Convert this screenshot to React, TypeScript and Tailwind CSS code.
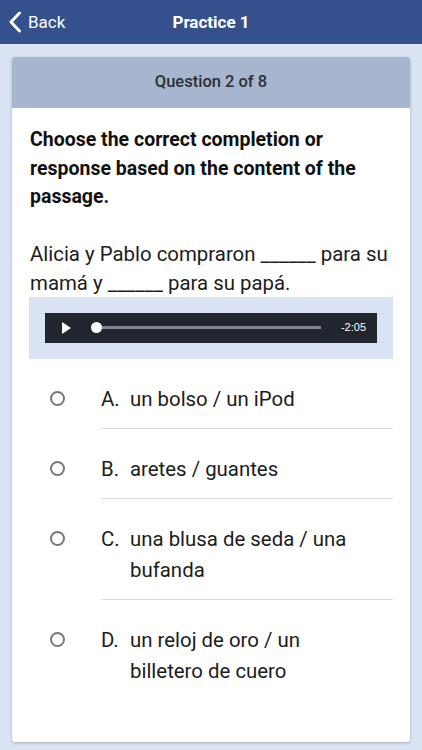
import React from 'react';

const options = [
  { letter: 'A.', text: 'un bolso / un iPod' },
  { letter: 'B.', text: 'aretes / guantes' },
  { letter: 'C.', text: 'una blusa de seda / una bufanda' },
  { letter: 'D.', text: 'un reloj de oro / un billetero de cuero' },
];

export default function App() {
  return (
    <div className="w-[422px] h-[750px] overflow-hidden bg-[#dae3f4] font-['Roboto','Liberation_Sans',sans-serif]">
      {/* header */}
      <div className="relative h-[44px] bg-[#34508d] flex items-center justify-center pt-[1px]">
        <div className="absolute left-[8px] top-0 h-[44px] flex items-center gap-[6px] text-white">
          <svg width="14" height="22" viewBox="0 0 14 22" fill="none">
            <path d="M11.5 2 L3 11 L11.5 20" stroke="white" strokeWidth="3" strokeLinecap="round" strokeLinejoin="round" />
          </svg>
          <span className="text-[17px] leading-none">Back</span>
        </div>
        <h1 className="text-white text-[17px] font-bold">Practice 1</h1>
      </div>

      {/* card */}
      <div className="mx-3 mt-[13px] h-[685px] bg-white rounded-[3px] shadow-[0_1px_3px_rgba(0,0,0,0.25)] overflow-hidden">
        <div className="h-[51px] bg-[#a8b5ce] flex items-center justify-center">
          <span className="text-[16.5px] font-medium text-[#2b2f38]">Question 2 of 8</span>
        </div>

        <div className="px-[17px] pt-[18px]">
          <p className="pl-[1px] text-[19.5px] leading-[28.5px] font-bold text-[#111]">
            Choose the correct completion or response based on the content of the passage.
          </p>
          <p className="pl-[1px] mt-[28px] text-[20.4px] leading-[29px] text-[#1c1c1c]">
            Alicia y Pablo compraron ______ para su mamá y ______ para su papá.
          </p>

          {/* audio */}
          <div className="mt-[-1px] bg-[#dae3f4] p-[16px]">
            <div className="h-[30px] bg-[#20252e] flex items-center pl-[17px] pr-[11px]">
              <svg width="9" height="12" viewBox="0 0 9 12">
                <path d="M0 0 L9 6 L0 12 Z" fill="white" />
              </svg>
              <div className="relative ml-[25px] flex-1 h-[3px] bg-[#7b8494] mr-[20px]">
                <div className="absolute left-[-5px] top-[-4px] w-[11px] h-[11px] rounded-full bg-white" />
              </div>
              <span className="text-[11px] text-white font-['Liberation_Sans',sans-serif]">-2:05</span>
            </div>
          </div>

          {/* options */}
          <div>
            {options.map((o, i) => (
              <div key={o.letter} className="flex">
                <div className="w-[72px] shrink-0 pl-[21px] pt-[32px]">
                  <div className="w-[15px] h-[15px] rounded-full border-2 border-[#787878]" />
                </div>
                <div
                  className={
                    'flex-1 pt-[25px] pb-[13px] flex text-[20.4px] leading-[31px] text-[#1c1c1c] ' +
                    (i < options.length - 1 ? 'border-b border-[#dcdcdc]' : '')
                  }
                >
                  <span className="w-[29px] shrink-0">{o.letter}</span>
                  <span className="pr-[20px]">{o.text}</span>
                </div>
              </div>
            ))}
          </div>
        </div>
      </div>
    </div>
  );
}
